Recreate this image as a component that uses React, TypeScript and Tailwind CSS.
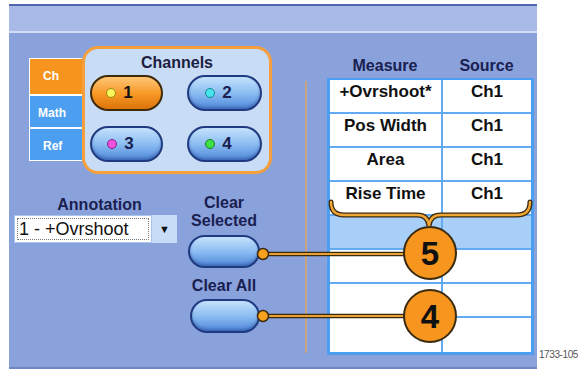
import React from "react";

const FONT = { fontFamily: '"Liberation Sans", Arial, sans-serif' };

const channelButtons = [
  { n: "1", dot: "bg-[#f8f45a] border-[#9a8a10]", active: true },
  { n: "2", dot: "bg-[#45e3ea] border-[#138a90]", active: false },
  { n: "3", dot: "bg-[#f052e0] border-[#8a1a80]", active: false },
  { n: "4", dot: "bg-[#3ee04a] border-[#12801a]", active: false },
];

const rows = [
  ["+Ovrshoot*", "Ch1"],
  ["Pos Width", "Ch1"],
  ["Area", "Ch1"],
  ["Rise Time", "Ch1"],
  ["", ""],
  ["", ""],
  ["", ""],
  ["", ""],
];

function PillButton({ className = "", children }: { className?: string; children?: React.ReactNode }) {
  return (
    <div
      className={`h-[34px] rounded-full border-2 border-[#1f3a80] bg-gradient-to-b from-[#c4e2fc] via-[#8cbdf2] to-[#4f88da] shadow-[inset_0_-2px_3px_rgba(20,40,110,0.35)] ${className}`}
    >
      {children}
    </div>
  );
}

function Callouts() {
  const brace = "M331 202 Q331 215 344 215 L417 215 Q428 215 429 226 Q430 215 441 215 L517 215 Q530 215 530 202";
  return (
    <svg className="absolute inset-0 pointer-events-none" width={578} height={371} viewBox="0 0 578 371">
      <path d={brace} fill="none" stroke="#3a2a10" strokeWidth={5} strokeLinecap="round" />
      <path d={brace} fill="none" stroke="#f2a634" strokeWidth={2.4} strokeLinecap="round" />
      {[254, 316].map((y) => (
        <g key={y}>
          <line x1={263} y1={y} x2={408} y2={y} stroke="#3a2a10" strokeWidth={4.5} />
          <line x1={263} y1={y} x2={408} y2={y} stroke="#e9a035" strokeWidth={2} />
          <circle cx={263} cy={y} r={5.5} fill="#f7a21f" stroke="#3a2a10" strokeWidth={1.5} />
        </g>
      ))}
      {[
        { y: 253, n: "5" },
        { y: 316, n: "4" },
      ].map((c) => (
        <g key={c.n}>
          <circle cx={430} cy={c.y} r={26} fill="#f7961e" stroke="#3a2a10" strokeWidth={2} />
          <text
            x={430}
            y={c.y + 12}
            textAnchor="middle"
            fontSize={33}
            fontWeight={700}
            fill="#111"
            style={FONT}
          >
            {c.n}
          </text>
        </g>
      ))}
    </svg>
  );
}

export default function App() {
  return (
    <div className="relative w-[578px] h-[371px] overflow-hidden bg-white flex items-start" style={FONT}>
      <div className="ml-[9px] mt-[4px] w-[532px] h-[365px] flex flex-col bg-[#89a2dc] border-t-2 border-[#5266ae] border-b-2 border-b-[#6f86c4]">
        <div className="h-[27px] bg-[#a9bae6] border-b-2 border-[#d2ddf5]" />

        <div className="flex flex-1">
          {/* left column */}
          <div className="w-[296px] flex flex-col">
            <div className="mt-[13px] flex items-start">
              <div className="ml-[20px] mt-[12px] w-[53px] flex flex-col border-l border-y border-white text-white text-[12px] font-bold">
                <div className="h-[35px] bg-[#f7941d] pl-[13px] pt-[8px]">Ch</div>
                <div className="h-[2px] bg-white" />
                <div className="h-[31px] bg-[#4c9ff0] pl-[8px] pt-[8px]">Math</div>
                <div className="h-[2px] bg-white" />
                <div className="h-[31px] bg-[#4c9ff0] pl-[13px] pt-[8px]">Ref</div>
              </div>
              <div className="w-[190px] h-[128px] rounded-[16px] border-[3px] border-[#f5a03c] bg-[#c8dcf6] flex flex-col">
                <div className="mt-[5px] text-center text-[16px] leading-[18px] font-bold text-[#1c2040]">Channels</div>
                <div className="mt-[3px] ml-[5px] grid grid-cols-[73px_75px] gap-x-[24px] gap-y-[15px]">
                  {channelButtons.map((b) =>
                    b.active ? (
                      <div
                        key={b.n}
                        className="h-[36px] rounded-full border-2 border-[#3e2a08] bg-gradient-to-b from-[#ffc673] via-[#f79a26] to-[#dd7408] flex items-center justify-center gap-[7px] pr-[14px]"
                      >
                        <span className={`w-[10px] h-[10px] rounded-full border ${b.dot}`} />
                        <span className="text-[17px] font-bold text-[#111]">{b.n}</span>
                      </div>
                    ) : (
                      <PillButton key={b.n} className="!h-[36px] flex items-center justify-center gap-[7px] pr-[12px]">
                        <span className={`w-[10px] h-[10px] rounded-full border ${b.dot}`} />
                        <span className="text-[17px] font-bold text-[#1a2050]">{b.n}</span>
                      </PillButton>
                    )
                  )}
                </div>
              </div>
            </div>

            <div className="mt-[20px] flex items-start">
              <div className="ml-[5px] w-[163px] pt-[2px] flex flex-col">
                <div className="text-center text-[16px] leading-[18px] font-bold text-[#1a2050] pl-[8px]">Annotation</div>
                <div className="mt-[1px] h-[28px] flex">
                  <div className="w-[138px] bg-white border border-[#a9c4ee] p-[2px] flex">
                    <div className="flex-1 border border-dotted border-[#777] flex items-center pl-[1px] text-[18px] text-[#111] whitespace-nowrap overflow-hidden">
                      1 - +Ovrshoot
                    </div>
                  </div>
                  <div className="flex-1 bg-[#c8dcf8] flex items-center justify-center text-[11px] text-[#111]">▼</div>
                </div>
              </div>

              <div className="ml-[11px] w-[72px] flex flex-col items-center text-[16px] leading-[18px] font-bold text-[#1a2050]">
                <div>Clear</div>
                <div>Selected</div>
                <PillButton className="mt-[5px] w-[72px] !h-[33px]" />
                <div className="mt-[9px]">Clear All</div>
                <PillButton className="mt-[4px] w-[70px] ml-[2px]" />
              </div>
            </div>
          </div>

          {/* separator */}
          <div className="mt-[48px] w-[2px] h-[272px] bg-[#c6a584]" />

          {/* table */}
          <div className="ml-[20px] w-[207px] flex flex-col">
            <div className="h-[45px] flex items-end pb-[3px] text-[16px] leading-[18px] font-bold text-[#1a2050]">
              <div className="w-[116px] text-center">Measure</div>
              <div className="flex-1 text-center pr-[4px]">Source</div>
            </div>
            <div className="border-[3px] border-t-2 border-[#4b9ef0] bg-white flex flex-col">
              {rows.map((r, i) => (
                <div
                  key={i}
                  className={`flex h-[34px] ${i < rows.length - 1 ? "border-b-2 border-[#62aaf2]" : ""} ${
                    i === 4 ? "bg-[#a7cff8]" : "bg-white"
                  }`}
                >
                  <div className="w-[113px] border-r-2 border-[#62aaf2] text-center pt-[2px] text-[17px] leading-[20px] font-bold text-[#111] whitespace-nowrap">
                    {r[0]}
                  </div>
                  <div className="flex-1 text-center pt-[2px] text-[17px] leading-[20px] font-bold text-[#111]">{r[1]}</div>
                </div>
              ))}
            </div>
          </div>
        </div>
      </div>

      <div className="ml-[2px] mt-[347px] text-[10px] text-[#555] whitespace-nowrap tracking-[-0.4px]">1733-105</div>

      <Callouts />
    </div>
  );
}
